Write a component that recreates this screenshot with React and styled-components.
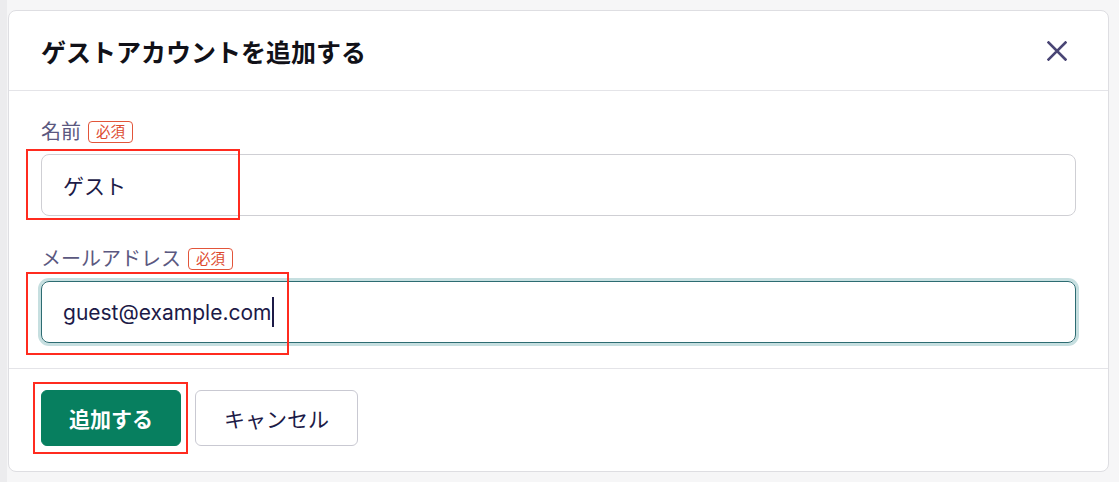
import styled, { createGlobalStyle } from "styled-components";

const GlobalStyle = createGlobalStyle`
  html, body {
    margin: 0;
    padding: 0;
    background: #f4f4f5;
    font-family: "Inter", "Noto Sans CJK JP", sans-serif;
  }
  * { box-sizing: border-box; }
`;

const Page = styled.div`
  position: relative;
  width: 1119px;
  height: 482px;
  padding: 10px 10px 10px 8px;
  background: linear-gradient(to right, #ececee 0, #ececee 7px, #f6f6f7 7px);
`;

const Dialog = styled.div`
  background: #fff;
  border: 1px solid #dedee2;
  border-radius: 8px;
  overflow: hidden;
`;

const Header = styled.div`
  height: 80px;
  padding: 0 32px;
  display: flex;
  align-items: center;
  justify-content: space-between;
  border-bottom: 1px solid #e4e4e8;
`;

const Title = styled.h2`
  margin: 0;
  font-size: 25px;
  font-weight: 700;
  color: #111118;
`;

const CloseButton = styled.button`
  border: none;
  background: none;
  padding: 0;
  margin-right: 8px;
  width: 22px;
  height: 22px;
  display: flex;
  align-items: center;
  justify-content: center;
  color: #4a4675;
  cursor: pointer;
`;

const Body = styled.div`
  padding: 29px 32px 25px;
  display: flex;
  flex-direction: column;
  gap: 31px;
  border-bottom: 1px solid #e4e4e8;
`;

const FieldGroup = styled.div`
  display: flex;
  flex-direction: column;
  gap: 10px;
`;

const LabelRow = styled.div`
  display: flex;
  align-items: center;
  gap: 7px;
  height: 24px;
`;

const Label = styled.label`
  font-size: 20px;
  color: #5b5880;
  line-height: 24px;
`;

const Required = styled.span`
  font-size: 14.5px;
  line-height: 20px;
  color: #dd4a2f;
  border: 1px solid #e2553a;
  border-radius: 4px;
  padding: 0 7px;
`;

const Field = styled.div`
  height: 62px;
  border-radius: 8px;
  border: 1px solid ${({ focused }) => (focused ? "#2d6c72" : "#cfcfd4")};
  box-shadow: ${({ focused }) => (focused ? "0 0 0 3px #c6dfe0" : "none")};
  padding: 0 21px;
  display: flex;
  align-items: center;
  font-size: 21px;
  color: #1c1a47;
`;

const Caret = styled.span`
  display: inline-block;
  width: 1.5px;
  height: 30px;
  background: #1c1a47;
  margin-left: 1px;
`;

const Footer = styled.div`
  padding: 21px 32px 25px;
  display: flex;
  gap: 14px;
`;

const Button = styled.button`
  height: 56px;
  padding: 0 ${({ primary }) => (primary ? "27px" : "28px")};
  border-radius: 6px;
  font-family: inherit;
  font-size: 21px;
  font-weight: ${({ primary }) => (primary ? 700 : 400)};
  color: ${({ primary }) => (primary ? "#ffffff" : "#1c1a47")};
  background: ${({ primary }) => (primary ? "#077f5f" : "#ffffff")};
  border: 1px solid ${({ primary }) => (primary ? "#077f5f" : "#c9c9d2")};
  cursor: pointer;
`;

const Highlight = styled.div`
  position: absolute;
  border: 2.5px solid #ff2b1f;
  pointer-events: none;
`;

const highlights = [
  { left: 26, top: 149, width: 214, height: 71 },
  { left: 26, top: 272, width: 263, height: 83 },
  { left: 33, top: 382, width: 155, height: 72 },
];

export default function App() {
  return (
    <>
      <GlobalStyle />
      <Page>
        <Dialog>
          <Header>
            <Title>ゲストアカウントを追加する</Title>
            <CloseButton aria-label="閉じる">
              <svg width="20" height="20" viewBox="0 0 20 20" fill="none">
                <path
                  d="M1.5 1.5L18.5 18.5M18.5 1.5L1.5 18.5"
                  stroke="currentColor"
                  strokeWidth="2.6"
                  strokeLinecap="square"
                />
              </svg>
            </CloseButton>
          </Header>
          <Body>
            <FieldGroup>
              <LabelRow>
                <Label>名前</Label>
                <Required>必須</Required>
              </LabelRow>
              <Field>ゲスト</Field>
            </FieldGroup>
            <FieldGroup>
              <LabelRow>
                <Label>メールアドレス</Label>
                <Required>必須</Required>
              </LabelRow>
              <Field focused>
                guest@example.com
                <Caret />
              </Field>
            </FieldGroup>
          </Body>
          <Footer>
            <Button primary>追加する</Button>
            <Button>キャンセル</Button>
          </Footer>
        </Dialog>
        {highlights.map((h, i) => (
          <Highlight key={i} style={h} />
        ))}
      </Page>
    </>
  );
}
